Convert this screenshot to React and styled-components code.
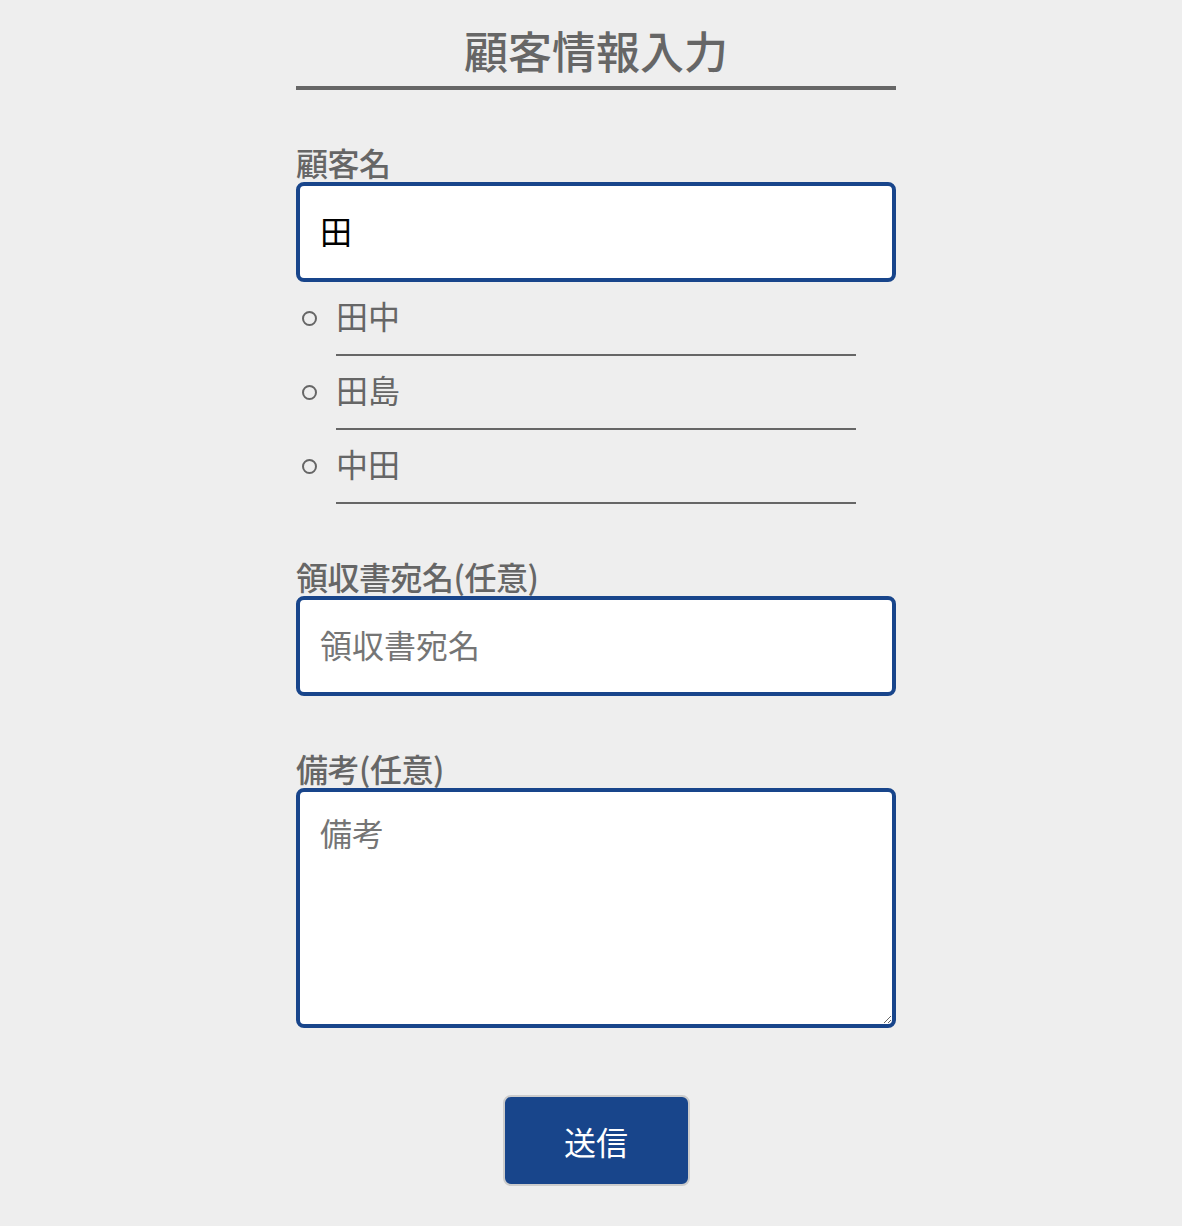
import React from "react";
import styled, { createGlobalStyle } from "styled-components";

const Global = createGlobalStyle`
  html, body {
    margin: 0;
    padding: 0;
    background: #eeeeee;
  }
  body {
    font-family: "Noto Sans CJK JP", "Noto Sans", sans-serif;
  }
  * { box-sizing: border-box; }
`;

const BLUE = "#18458b";
const GRAY = "#666666";

const Page = styled.main`
  padding-left: 10px;
`;

const Form = styled.form`
  width: 600px;
  margin: 0 auto;
  padding-bottom: 40px;
  display: flex;
  flex-direction: column;
`;

const Title = styled.h1`
  margin: 0;
  padding: 23px 0 9px;
  font-size: 44px;
  line-height: 54px;
  font-weight: 500;
  color: ${GRAY};
  text-align: center;
  border-bottom: 4px solid ${GRAY};
`;

const Field = styled.div`
  margin-top: 52px;
  display: flex;
  flex-direction: column;
`;

const Label = styled.label`
  display: block;
  font-size: 32px;
  line-height: 40px;
  font-weight: 500;
  color: ${GRAY};
  letter-spacing: -0.5px;
`;

const inputBase = `
  width: 100%;
  border: 4px solid ${BLUE};
  border-radius: 8px;
  background: #ffffff;
  font-family: "Noto Sans CJK JP", "Noto Sans", sans-serif;
  font-size: 32px;
  color: #000000;
  outline: none;
  &::placeholder { color: #757575; }
`;

const TextInput = styled.input`
  ${inputBase}
  height: 100px;
  padding: 0 20px 4px;
`;

const TextArea = styled.textarea`
  ${inputBase}
  display: block;
  height: 240px;
  padding: 20px;
  line-height: 40px;
  resize: vertical;
`;

const Suggestions = styled.ul`
  margin: 0;
  padding: 0 40px;
  list-style: none;
`;

const Suggestion = styled.li`
  display: flex;
  align-items: center;
  height: 74px;
  padding-bottom: 6px;
  font-size: 32px;
  line-height: 40px;
  color: ${GRAY};
  border-bottom: 2px solid ${GRAY};

  &::before {
    content: "";
    flex: none;
    width: 11px;
    height: 11px;
    border: 2px solid ${GRAY};
    border-radius: 50%;
    margin: 6px 19px 0 -34px;
  }
`;

const SubmitButton = styled.button`
  align-self: center;
  margin-top: 67px;
  width: 187px;
  height: 91px;
  border: 2px solid #cccccc;
  border-radius: 8px;
  background: ${BLUE};
  color: #ffffff;
  font-family: "Noto Sans CJK JP", "Noto Sans", sans-serif;
  font-size: 32px;
  cursor: pointer;
`;

export default function App() {
  const suggestions = ["田中", "田島", "中田"];
  return (
    <Page>
      <Global />
      <Form onSubmit={(e) => e.preventDefault()}>
        <Title>顧客情報入力</Title>
        <Field>
          <Label htmlFor="name">顧客名</Label>
          <TextInput id="name" defaultValue="田" />
          <Suggestions>
            {suggestions.map((s) => (
              <Suggestion key={s}>{s}</Suggestion>
            ))}
          </Suggestions>
        </Field>
        <Field>
          <Label htmlFor="receipt">領収書宛名(任意)</Label>
          <TextInput id="receipt" placeholder="領収書宛名" />
        </Field>
        <Field>
          <Label htmlFor="note">備考(任意)</Label>
          <TextArea id="note" placeholder="備考" />
        </Field>
        <SubmitButton type="submit">送信</SubmitButton>
      </Form>
    </Page>
  );
}
